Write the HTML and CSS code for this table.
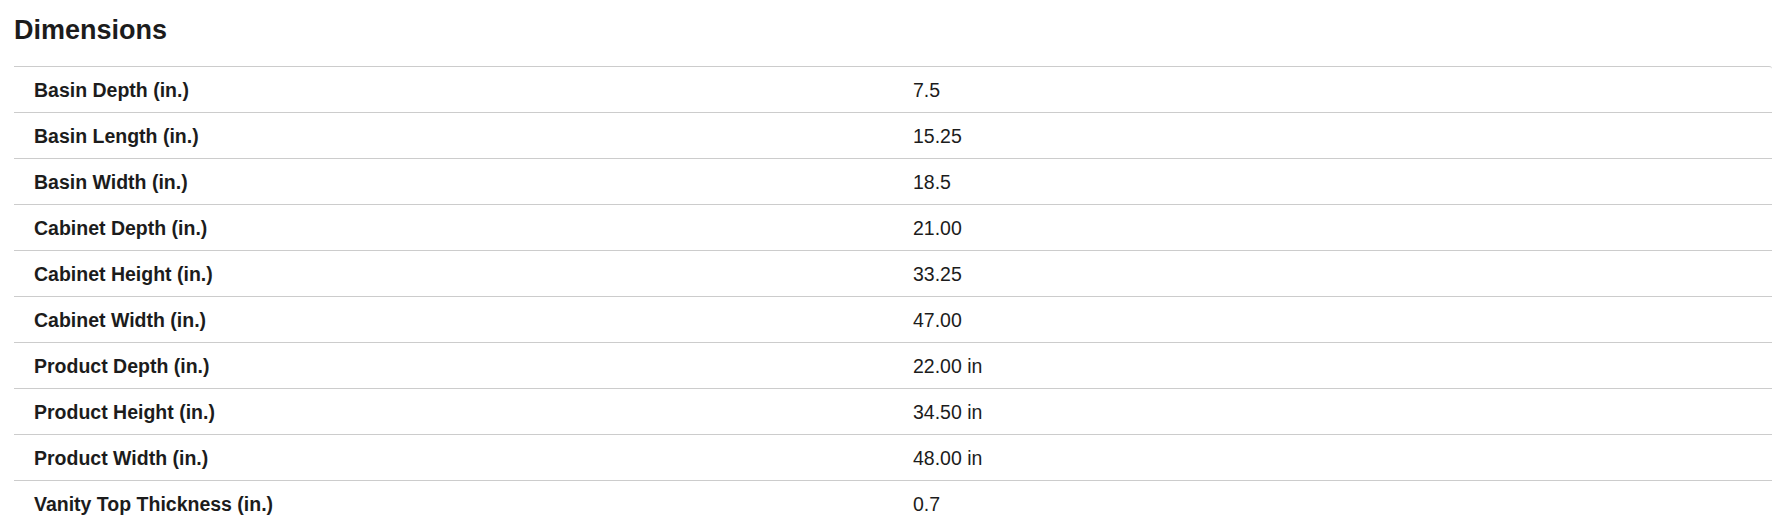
FILE: index.html
```html
<!DOCTYPE html>
<html lang="en">
<head>
<meta charset="utf-8">
<title>Dimensions</title>
<link rel="stylesheet" href="styles.css">
</head>
<body>
<section class="specs">
  <h2 class="specs-title">Dimensions</h2>
  <div class="specs-table">
    <div class="spec-row"><div class="spec-label">Basin Depth (in.)</div><div class="spec-value">7.5</div></div>
    <div class="spec-row"><div class="spec-label">Basin Length (in.)</div><div class="spec-value">15.25</div></div>
    <div class="spec-row"><div class="spec-label">Basin Width (in.)</div><div class="spec-value">18.5</div></div>
    <div class="spec-row"><div class="spec-label">Cabinet Depth (in.)</div><div class="spec-value">21.00</div></div>
    <div class="spec-row"><div class="spec-label">Cabinet Height (in.)</div><div class="spec-value">33.25</div></div>
    <div class="spec-row"><div class="spec-label">Cabinet Width (in.)</div><div class="spec-value">47.00</div></div>
    <div class="spec-row"><div class="spec-label">Product Depth (in.)</div><div class="spec-value">22.00 in</div></div>
    <div class="spec-row"><div class="spec-label">Product Height (in.)</div><div class="spec-value">34.50 in</div></div>
    <div class="spec-row"><div class="spec-label">Product Width (in.)</div><div class="spec-value">48.00 in</div></div>
    <div class="spec-row"><div class="spec-label">Vanity Top Thickness (in.)</div><div class="spec-value">0.7</div></div>
  </div>
</section>
</body>
</html>
```

FILE: styles.css
```css
html, body {
  margin: 0;
  padding: 0;
  background: #ffffff;
}

body {
  font-family: "Liberation Sans", Arial, Helvetica, sans-serif;
  color: #1c1c1c;
}

.specs {
  padding: 15px 10px 0 14px;
}

.specs-title {
  margin: 0 0 20px 0;
  font-size: 27px;
  line-height: 31px;
  font-weight: 700;
  color: #1c1c1c;
}

.specs-table {
  border-top: 1px solid #cccccc;
  border-top-right-radius: 3px;
}

.spec-row {
  display: grid;
  grid-template-columns: 1fr 1fr;
  border-bottom: 1px solid #cccccc;
  font-size: 19.5px;
  line-height: 22px;
}

.spec-label,
.spec-value {
  padding: 12px 20px 11px 20px;
}

.spec-label {
  font-weight: 700;
}

.spec-value {
  font-weight: 400;
}
```
